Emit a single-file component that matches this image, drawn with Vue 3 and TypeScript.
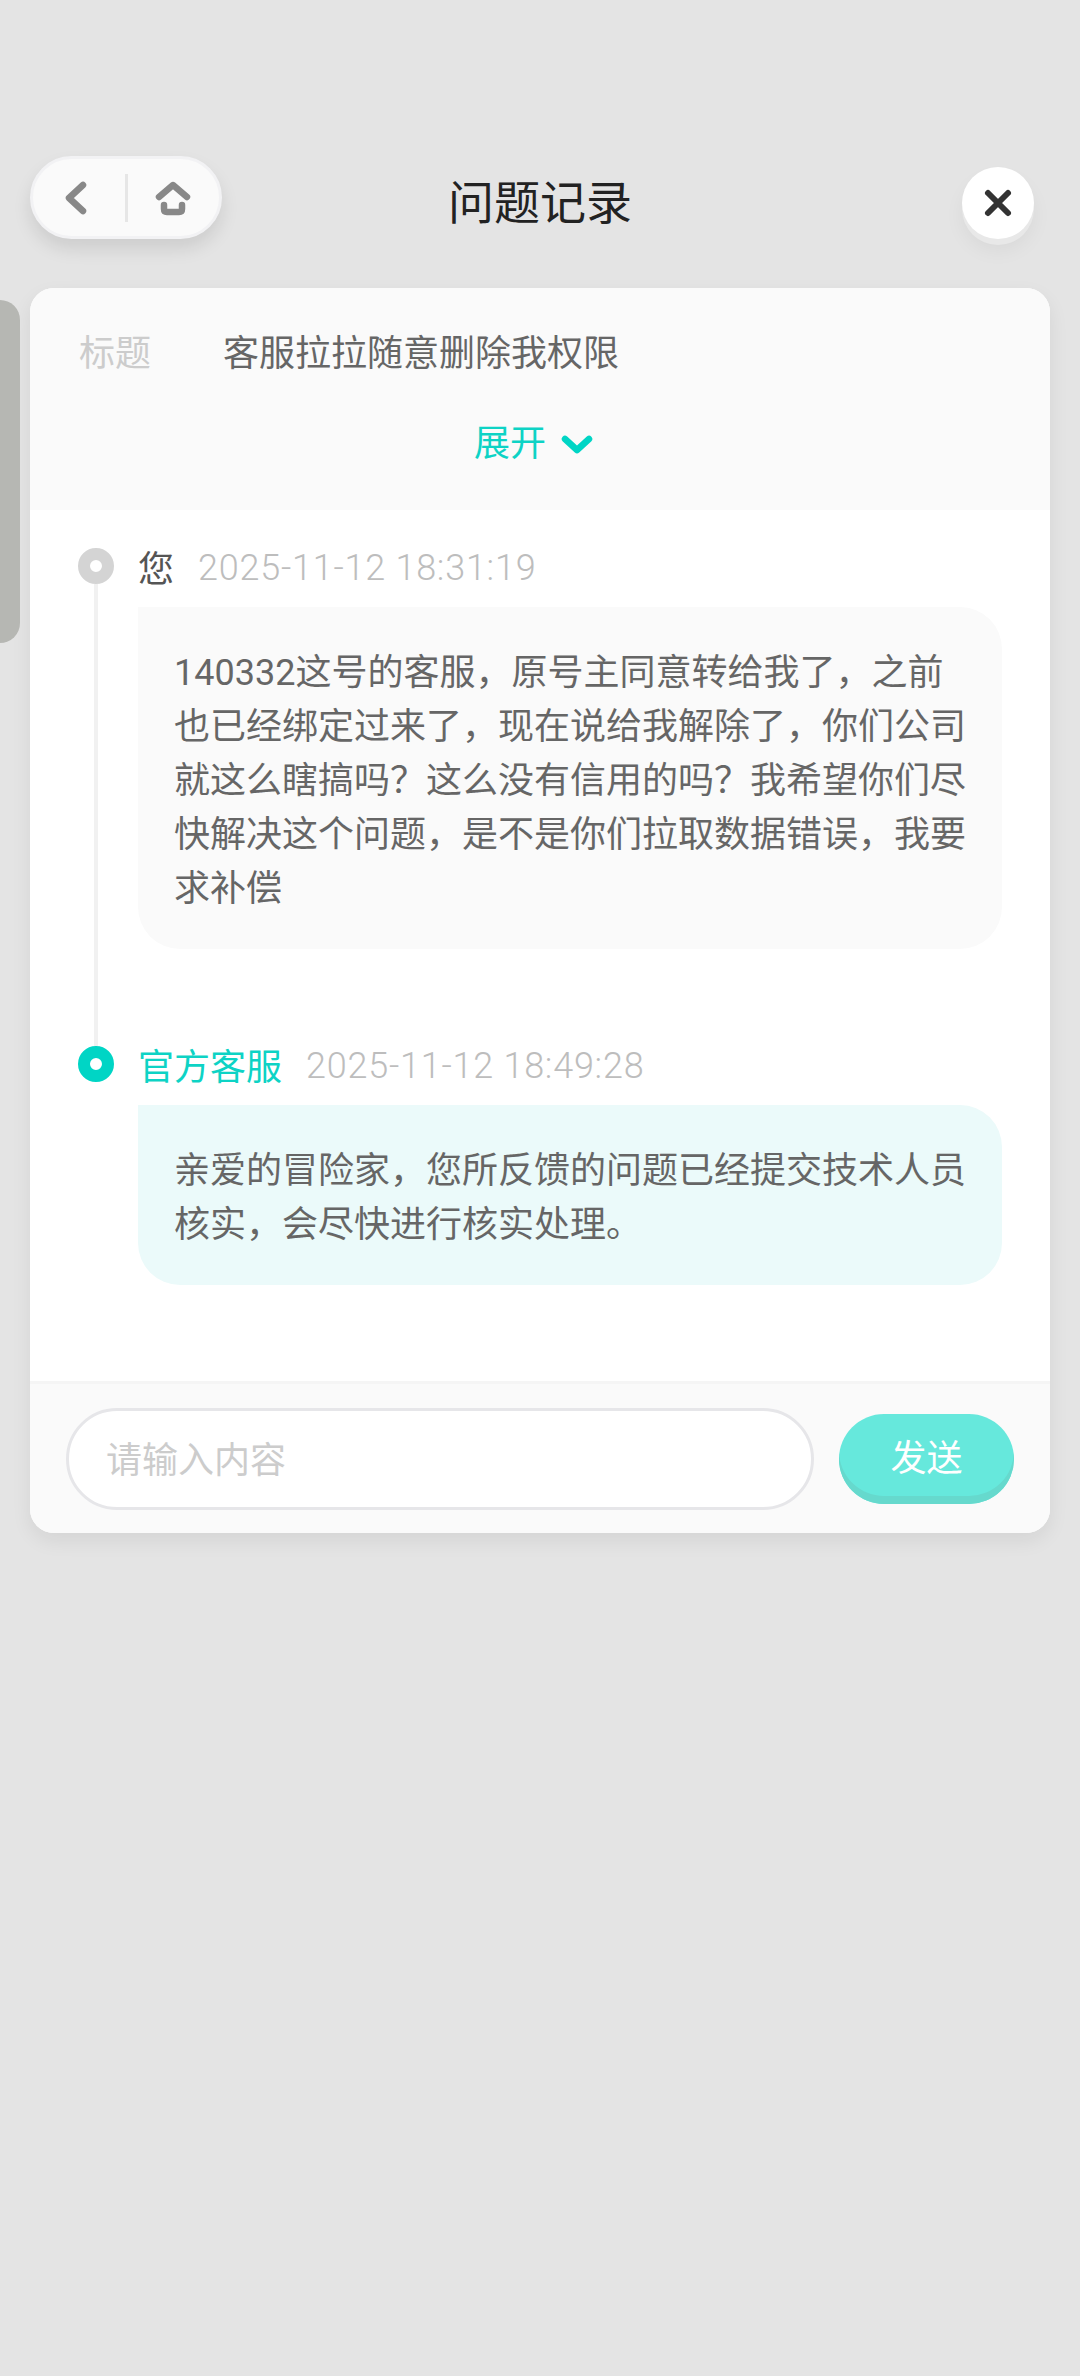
<template>
  <div class="page">
    <div class="side-handle"></div>

    <header class="top-bar">
      <div class="nav-pill">
        <button class="nav-btn">
          <svg width="32" height="40" viewBox="0 0 32 40">
            <path d="M20 7 L6 20 L20 33" class="icon-line" />
          </svg>
        </button>
        <span class="nav-divider"></span>
        <button class="nav-btn home">
          <svg width="40" height="40" viewBox="0 0 40 40">
            <path d="M5 19 L19 7 L33 19" class="icon-line" />
            <path d="M10 27 V31 Q10 34 13 34 H25 Q28 34 28 31 V27" class="icon-line" />
          </svg>
        </button>
      </div>
      <h1 class="page-title">问题记录</h1>
      <button class="close-btn">
        <svg width="30" height="30" viewBox="0 0 30 30">
          <path d="M5 5 L25 25 M25 5 L5 25" class="close-line" />
        </svg>
      </button>
    </header>

    <section class="card">
      <div class="summary">
        <div class="summary-row">
          <span class="summary-label">标题</span>
          <span class="summary-value">{{ subject }}</span>
        </div>
        <div class="expand">
          <span>展开</span>
          <svg width="32" height="20" viewBox="0 0 32 20">
            <path d="M4 4 L16 15 L28 4" class="expand-line" />
          </svg>
        </div>
      </div>

      <div class="timeline">
        <div
          v-for="(item, i) in records"
          :key="item.time"
          class="entry"
          :class="{ official: item.official }"
        >
          <div class="rail">
            <span class="dot"></span>
            <span v-if="i < records.length - 1" class="rail-line"></span>
          </div>
          <div class="entry-main">
            <div class="entry-head">
              <span class="entry-name">{{ item.name }}</span>
              <span class="entry-time">{{ item.time }}</span>
            </div>
            <div class="bubble">{{ item.text }}</div>
          </div>
        </div>
      </div>

      <div class="composer">
        <div class="input-box">请输入内容</div>
        <button class="send-btn">发送</button>
      </div>
    </section>
  </div>
</template>

<script setup lang="ts">
interface RecordItem {
  name: string
  time: string
  text: string
  official: boolean
}

const subject = '客服拉拉随意删除我权限'

const records: RecordItem[] = [
  {
    name: '您',
    time: '2025-11-12 18:31:19',
    text: '140332这号的客服，原号主同意转给我了，之前也已经绑定过来了，现在说给我解除了，你们公司就这么瞎搞吗？这么没有信用的吗？我希望你们尽快解决这个问题，是不是你们拉取数据错误，我要求补偿',
    official: false
  },
  {
    name: '官方客服',
    time: '2025-11-12 18:49:28',
    text: '亲爱的冒险家，您所反馈的问题已经提交技术人员核实，会尽快进行核实处理。',
    official: true
  }
]
</script>

<style>
html,
body {
  margin: 0;
  background: #e4e4e4;
}
</style>

<style scoped>
.page {
  position: relative;
  min-height: 2376px;
  box-sizing: border-box;
  padding: 156px 30px 0;
  background: #e4e4e4;
  font-family: "Roboto", "Noto Sans CJK SC", sans-serif;
  font-size: 36px;
  color: #666;
}

.side-handle {
  position: absolute;
  left: 0;
  top: 300px;
  width: 20px;
  height: 343px;
  background: #b6b7b3;
  border-radius: 0 20px 20px 0;
}

button {
  padding: 0;
  border: 0;
  background: none;
  font: inherit;
}

.top-bar {
  display: grid;
  grid-template-columns: 1fr auto 1fr;
  align-items: center;
  height: 83px;
  margin-bottom: 49px;
}

.nav-pill {
  display: flex;
  align-items: center;
  justify-self: start;
  box-sizing: border-box;
  width: 192px;
  height: 83px;
  background: #fafafa;
  border: 3px solid #f2f2f4;
  border-radius: 42px;
  box-shadow: 0 10px 18px rgba(0, 0, 0, 0.1);
}

.nav-btn {
  display: flex;
  align-items: center;
  justify-content: center;
  width: 92px;
  height: 40px;
}

.nav-btn.home {
  width: 91px;
}

.nav-divider {
  width: 3px;
  height: 48px;
  background: #e6e6e6;
}

.icon-line {
  fill: none;
  stroke: #888;
  stroke-width: 6.5;
  stroke-linecap: round;
  stroke-linejoin: round;
}

.page-title {
  margin: 10px 0 0;
  font-size: 46px;
  font-weight: 400;
  line-height: 60px;
  color: #222;
}

.close-btn {
  display: flex;
  align-items: center;
  justify-content: center;
  justify-self: end;
  width: 72px;
  height: 72px;
  margin: 11px 16px 0 0;
  background: #fff;
  border-radius: 50%;
  box-shadow: 0 6px 0 #e8e8e8, 0 12px 20px rgba(0, 0, 0, 0.05);
}

.close-line {
  fill: none;
  stroke: #333;
  stroke-width: 6;
  stroke-linecap: round;
}

.card {
  overflow: hidden;
  background: #fff;
  border-radius: 24px;
  box-shadow: 0 8px 20px rgba(0, 0, 0, 0.07);
}

.summary {
  box-sizing: border-box;
  height: 222px;
  padding: 42px 49px 0;
  background: #fafafa;
}

.summary-row {
  display: flex;
  line-height: 48px;
}

.summary-label {
  width: 144px;
  color: #ccc;
}

.summary-value {
  color: #666;
}

.expand {
  display: flex;
  align-items: center;
  justify-content: center;
  gap: 15px;
  margin-top: 42px;
  padding-right: 13px;
  line-height: 48px;
  color: #0dd3c5;
}

.expand svg {
  margin-top: 2px;
}

.expand-line {
  fill: none;
  stroke: #00d5c5;
  stroke-width: 6.5;
  stroke-linecap: round;
  stroke-linejoin: round;
}

.timeline {
  padding: 38px 48px 0 48px;
}

.entry {
  display: flex;
  gap: 24px;
  padding-bottom: 97px;
}

.entry:last-child {
  padding-bottom: 96px;
}

.rail {
  display: flex;
  flex-direction: column;
  align-items: center;
  flex: none;
  width: 36px;
  margin-bottom: -97px;
}

.entry:last-child .rail {
  margin-bottom: 0;
}

.dot {
  flex: none;
  box-sizing: border-box;
  width: 36px;
  height: 36px;
  background: #fff;
  border: 12px solid #d4d4d4;
  border-radius: 50%;
}

.official .dot {
  border-color: #00d5c5;
}

.rail-line {
  flex: 1;
  width: 4px;
  background: #f1f1f1;
}

.entry-main {
  flex: 1;
  min-width: 0;
}

.entry-head {
  display: flex;
  align-items: center;
  gap: 24px;
  height: 36px;
  margin-bottom: 23px;
}

.entry-name {
  color: #555;
}

.official .entry-name {
  color: #0dd3c5;
}

.entry-time {
  padding-top: 3px;
  font-weight: 300;
  letter-spacing: 0.75px;
  color: #bdbdbd;
}

.bubble {
  padding: 39px 30px 33px 36px;
  line-height: 54px;
  color: #666;
  background: #fafafa;
  border-radius: 0 42px 42px 42px;
}

.official .bubble {
  background: #ebfafa;
}

.composer {
  display: flex;
  align-items: center;
  gap: 25px;
  box-sizing: border-box;
  height: 152px;
  padding: 0 36px 0 36px;
  background: #fafafa;
  border-top: 3px solid #f5f5f5;
}

.input-box {
  flex: none;
  box-sizing: border-box;
  width: 748px;
  height: 102px;
  padding-left: 37px;
  line-height: 100px;
  color: #ccc;
  background: #fff;
  border: 3px solid #e6e6e9;
  border-radius: 51px;
}

.send-btn {
  flex: none;
  width: 175px;
  height: 90px;
  line-height: 84px;
  color: #fff;
  background: #66e8dc;
  border-radius: 45px;
  box-shadow: inset 0 -8px 0 #66d9cd;
}
</style>
